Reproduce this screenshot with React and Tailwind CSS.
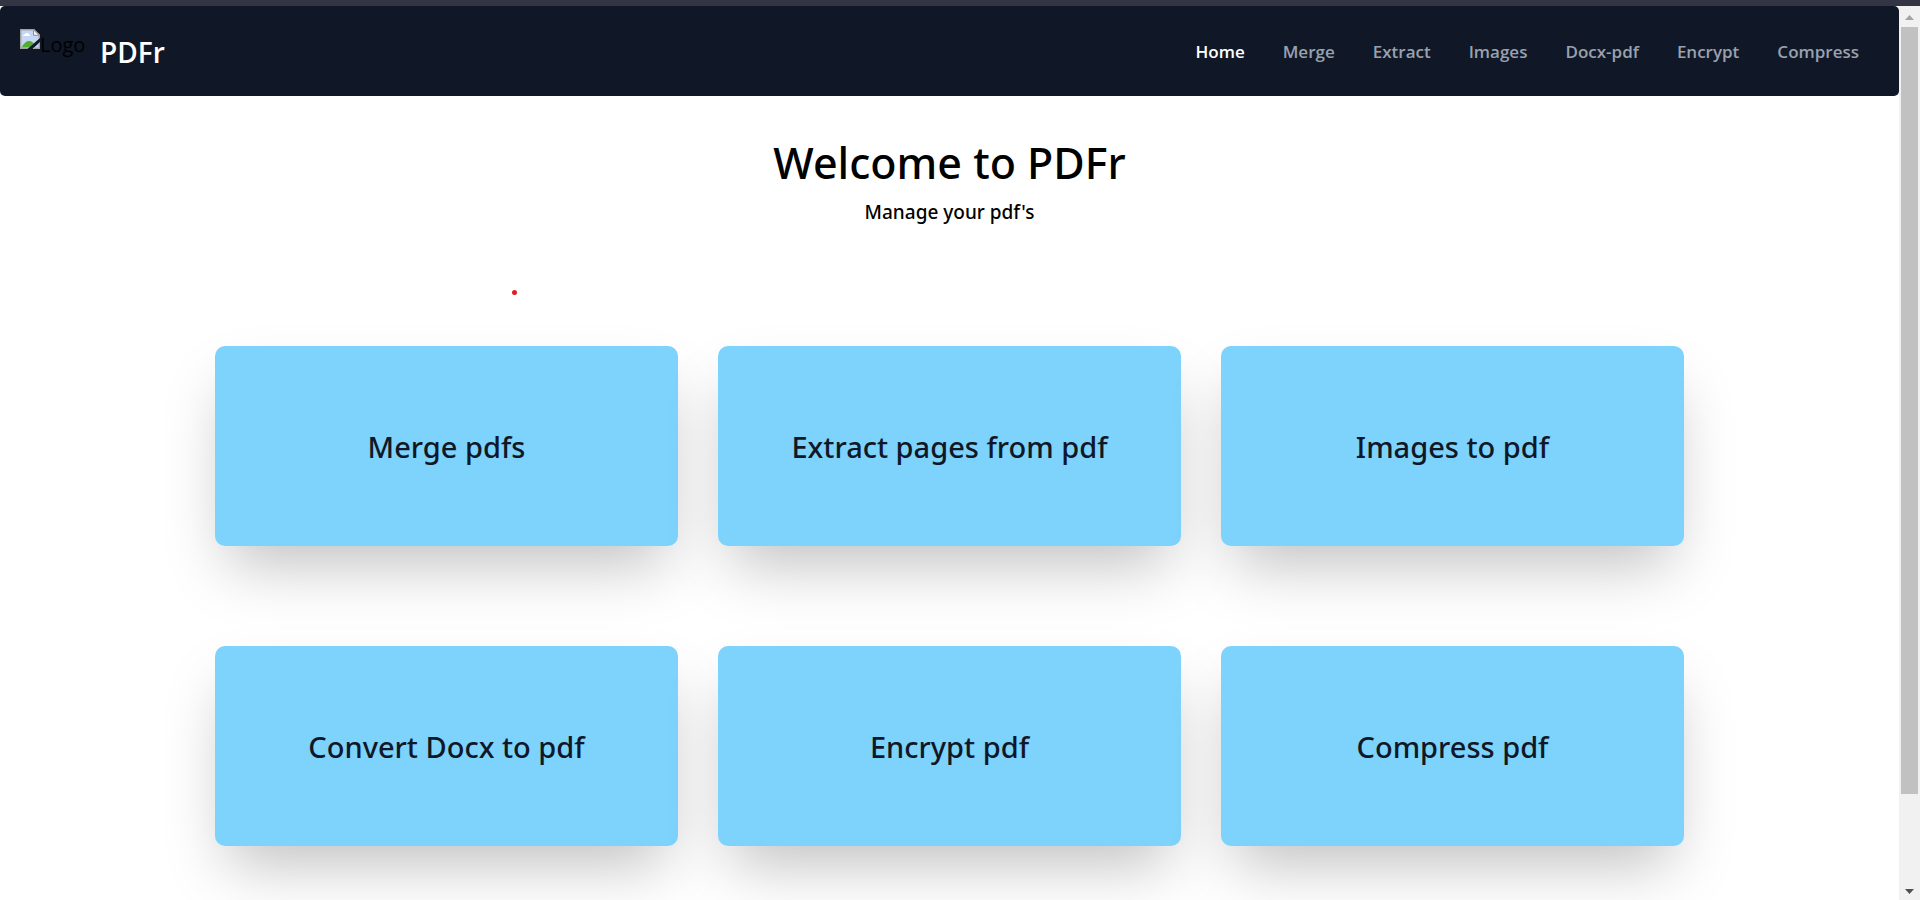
const links = ["Home", "Merge", "Extract", "Images", "Docx-pdf", "Encrypt", "Compress"];

const tools = [
  "Merge pdfs",
  "Extract pages from pdf",
  "Images to pdf",
  "Convert Docx to pdf",
  "Encrypt pdf",
  "Compress pdf",
];

function BrokenImage() {
  return (
    <svg className="h-5 w-5 shrink-0" viewBox="0 0 20 20" aria-hidden="true">
      <path d="M0.5 0.5H14L19.5 6V11L10 19.5H0.5Z" fill="#c6d7f5" />
      <path d="M1.5 18.6C4 13.5 7 11.8 9.5 12C11.5 12.2 13 13.5 14 14.5L9.5 18.6Z" fill="#54ad33" />
      <path d="M3 7C3 5.5 4.5 5.5 5 5C6 3.5 8 4 8.5 5C10 5 10 7 9.5 7Z" fill="#fff" />
      <path d="M13.5 0.7V6.3H19.3Z" fill="#f5f5f5" stroke="#8d8d8d" />
      <path d="M8 19.3H0.7V0.7H14L19.3 6V10.5" fill="none" stroke="#a3a3a3" strokeWidth="1.4" />
      <path d="M20 11L12.5 20H7.5L20 9Z" fill="#111827" />
      <path d="M20 13V20H12.5Z" fill="#c6d7f5" />
      <path d="M19.3 14V19.3H13.5" fill="none" stroke="#a3a3a3" strokeWidth="1.4" />
    </svg>
  );
}

function Navbar() {
  return (
    <nav className="flex h-[90px] items-center justify-between rounded-[5px] bg-gray-900 pt-[2px] pl-5 pr-10">
      <a href="#home" className="flex items-center gap-4">
        <span className="flex h-[46px] w-16 items-start text-xl leading-8 text-black">
          <BrokenImage />
          <span>Logo</span>
        </span>
        <span className="text-[28px] leading-9 font-semibold text-white">PDFr</span>
      </a>
      <ul className="flex gap-[38px] text-[17px] leading-6 font-semibold">
        {links.map((label, i) => (
          <li key={label}>
            <a href={`#${label.toLowerCase()}`} className={i === 0 ? "text-white" : "text-gray-400"}>
              {label}
            </a>
          </li>
        ))}
      </ul>
    </nav>
  );
}

function Scrollbar() {
  return (
    <div className="flex w-[21px] shrink-0 flex-col items-center bg-[#f1f1f1]" aria-hidden="true">
      <svg className="h-[21px] w-[21px] shrink-0" viewBox="0 0 21 21">
        <path d="M6 14L10.5 9L15 14Z" fill="#a3a3a3" />
      </svg>
      <div className="flex w-[17px] flex-1 flex-col">
        <div className="h-[90%] bg-[#c1c1c1]" />
      </div>
      <svg className="h-[21px] w-[21px] shrink-0" viewBox="0 0 21 21">
        <path d="M6 10L10.5 15L15 10Z" fill="#505050" />
      </svg>
    </div>
  );
}

export default function App() {
  return (
    <div className="flex h-screen flex-col bg-white font-['Open_Sans','Noto_Sans',sans-serif]">
      <div className="h-[6px] shrink-0 bg-[#333544]" />
      <div className="flex min-h-0 flex-1">
        <div className="relative min-w-0 flex-1 overflow-hidden">
          <Navbar />
          <main className="font-['Noto_Sans',sans-serif]">
            <header className="pt-10 text-center font-medium text-black">
              <h1 className="text-[43px] leading-[54px]">Welcome to PDFr</h1>
              <p className="mt-[6px] text-[19px] leading-8">Manage your pdf&apos;s</p>
            </header>
            <div className="mx-auto grid max-w-[1549px] grid-cols-3 gap-x-10 gap-y-[100px] px-10 pt-[118px] pb-20">
              {tools.map((label) => (
                <a
                  key={label}
                  href={`#${label.toLowerCase().replaceAll(" ", "-")}`}
                  className="flex h-[200px] items-center justify-center rounded-[10px] bg-[#7dd3fc] pt-[2px] text-[29px] leading-10 font-medium text-gray-900 shadow-[0_31px_62px_-13px_rgba(0,0,0,0.25)]"
                >
                  {label}
                </a>
              ))}
            </div>
          </main>
          <span className="absolute top-[284px] left-[512px] h-[5px] w-[5px] rounded-full bg-[#e11d1d]" />
        </div>
        <Scrollbar />
      </div>
    </div>
  );
}
